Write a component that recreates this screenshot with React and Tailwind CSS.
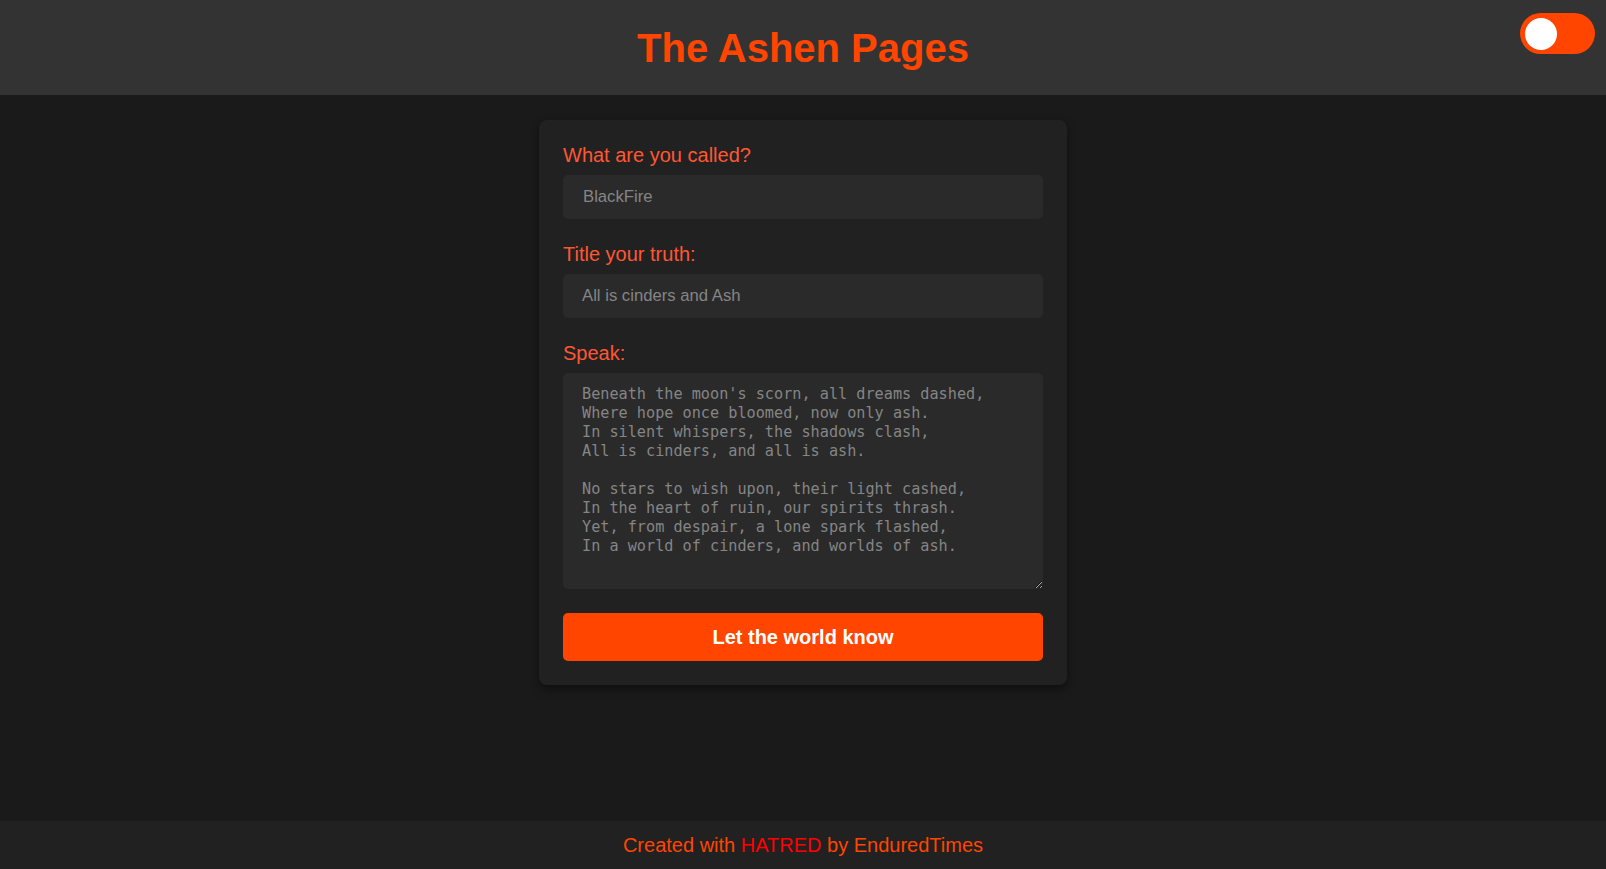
import React, { useState } from 'react'

const poem = `Beneath the moon's scorn, all dreams dashed,
Where hope once bloomed, now only ash.
In silent whispers, the shadows clash,
All is cinders, and all is ash.

No stars to wish upon, their light cashed,
In the heart of ruin, our spirits thrash.
Yet, from despair, a lone spark flashed,
In a world of cinders, and worlds of ash.`

export default function App() {
  const [dark, setDark] = useState(true)

  return (
    <div className="min-h-screen flex flex-col bg-[#1a1a1a] font-['Liberation_Sans',Arial,sans-serif]">
      {/* Header */}
      <header className="relative h-[95px] bg-[#333333] flex items-center justify-center">
        <h1 className="text-[40px] font-bold text-[#ff4500] leading-none">The Ashen Pages</h1>
        <button
          onClick={() => setDark(!dark)}
          className="absolute right-[11px] top-[13px] w-[75px] h-[41px] rounded-full bg-[#ff4500] flex items-center px-[5px]"
        >
          <span className="block w-[32px] h-[32px] rounded-full bg-white" />
        </button>
      </header>

      {/* Content */}
      <main className="flex-1">
        <form
          onSubmit={(e) => e.preventDefault()}
          className="mx-auto mt-[25px] w-[528px] p-6 rounded-lg bg-[#212121] shadow-[0_4px_10px_rgba(0,0,0,0.45)]"
        >
          <label className="block mb-2 text-[20px] leading-[23px] text-[#ff5733]">What are you called?</label>
          <input
            defaultValue="BlackFire"
            className="block w-full h-[44px] mb-6 px-[20px] rounded-[5px] bg-[#2a2a2a] text-[16.7px] text-[#858585] outline-none"
          />

          <label className="block mb-2 text-[20px] leading-[23px] text-[#ff5733]">Title your truth:</label>
          <input
            defaultValue="All is cinders and Ash"
            className="block w-full h-[44px] mb-6 px-[19px] rounded-[5px] bg-[#2a2a2a] text-[16.7px] text-[#858585] outline-none"
          />

          <label className="block mb-2 text-[20px] leading-[23px] text-[#ff5733]">Speak:</label>
          <textarea
            defaultValue={poem}
            rows={10}
            className="block w-full h-[216px] mb-6 px-[19px] py-3 rounded-[5px] bg-[#2a2a2a] text-[15.2px] leading-[19px] text-[#858585] font-['DejaVu_Sans_Mono',monospace] outline-none"
          />

          <button
            type="submit"
            className="block w-full h-[48px] rounded-[5px] bg-[#ff4500] text-white text-[20px] font-bold"
          >
            Let the world know
          </button>
        </form>
      </main>

      {/* Footer */}
      <footer className="h-[48px] bg-[#212121] flex items-center justify-center text-[20px] text-[#ff4500]">
        <p>
          Created with <span className="text-[#ff0000]">HATRED</span> by EnduredTimes
        </p>
      </footer>
    </div>
  )
}
